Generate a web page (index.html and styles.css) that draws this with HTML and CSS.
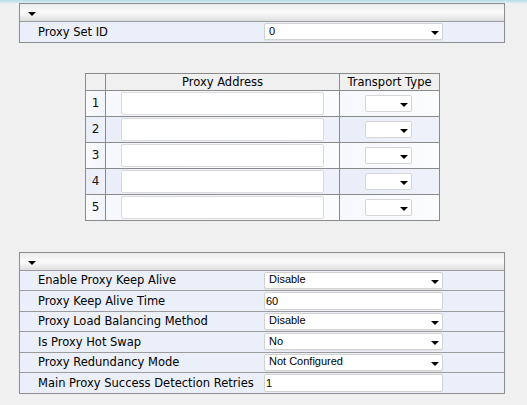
FILE: index.html
```html
<!DOCTYPE html>
<html>
<head>
<meta charset="utf-8">
<title>Proxy Set</title>
<link rel="stylesheet" href="styles.css">
</head>
<body>
<div class="topstrip"></div>

<div class="panel">
  <div class="phead"><span class="tri"></span></div>
  <div class="prow">
    <div class="lbl">Proxy Set ID</div>
    <div class="sel"><span class="sv">0</span><span class="arr"></span></div>
  </div>
</div>

<table class="grid">
  <thead>
    <tr><th class="cn"></th><th class="ca">Proxy Address</th><th class="ct">Transport Type</th></tr>
  </thead>
  <tbody>
    <tr class="odd"><td class="num">1</td><td class="addr"><div class="tin"></div></td><td class="tt"><div class="tsel"><span class="arr"></span></div></td></tr>
    <tr class="even"><td class="num">2</td><td class="addr"><div class="tin"></div></td><td class="tt"><div class="tsel"><span class="arr"></span></div></td></tr>
    <tr class="odd"><td class="num">3</td><td class="addr"><div class="tin"></div></td><td class="tt"><div class="tsel"><span class="arr"></span></div></td></tr>
    <tr class="even"><td class="num">4</td><td class="addr"><div class="tin"></div></td><td class="tt"><div class="tsel"><span class="arr"></span></div></td></tr>
    <tr class="odd"><td class="num">5</td><td class="addr"><div class="tin"></div></td><td class="tt"><div class="tsel"><span class="arr"></span></div></td></tr>
  </tbody>
</table>

<div class="panel second">
  <div class="phead"><span class="tri"></span></div>
  <div class="prow">
    <div class="lbl">Enable Proxy Keep Alive</div>
    <div class="sel"><span class="sv">Disable</span><span class="arr"></span></div>
  </div>
  <div class="prow">
    <div class="lbl">Proxy Keep Alive Time</div>
    <div class="inp">60</div>
  </div>
  <div class="prow">
    <div class="lbl">Proxy Load Balancing Method</div>
    <div class="sel"><span class="sv">Disable</span><span class="arr"></span></div>
  </div>
  <div class="prow">
    <div class="lbl">Is Proxy Hot Swap</div>
    <div class="sel"><span class="sv">No</span><span class="arr"></span></div>
  </div>
  <div class="prow">
    <div class="lbl">Proxy Redundancy Mode</div>
    <div class="sel"><span class="sv">Not Configured</span><span class="arr"></span></div>
  </div>
  <div class="prow">
    <div class="lbl">Main Proxy Success Detection Retries</div>
    <div class="inp">1</div>
  </div>
</div>
</body>
</html>
```

FILE: styles.css
```css
html, body {
  margin: 0;
  padding: 0;
}
body {
  background: #f0f0f0;
  font-family: "DejaVu Sans", Verdana, sans-serif;
  font-size: 11.5px;
  color: #000;
}
.topstrip {
  height: 3px;
  background: linear-gradient(#b7dce8, #d9eef4);
}
.panel {
  margin-left: 19px;
  width: 486px;
  box-sizing: border-box;
  border: 1px solid #8d8d8d;
}
.panel.second {
  margin-top: 31px;
}
.phead {
  height: 17px;
  background: linear-gradient(#ebebeb, #fafafa 45%, #f6f6f6 60%, #dedede);
  display: flex;
  align-items: flex-start;
}
.tri {
  display: block;
  width: 0;
  height: 0;
  margin-left: 8px;
  margin-top: 8px;
  border-left: 4px solid transparent;
  border-right: 4px solid transparent;
  border-top: 4px solid #000;
}
.prow {
  display: flex;
  align-items: center;
  height: 19.5px;
  background: #ebeff9;
  border-top: 1px solid #9c9c9c;
}
.lbl {
  width: 244px;
  box-sizing: border-box;
  padding-left: 18px;
  white-space: nowrap;
}
.sel, .inp {
  width: 179px;
  height: 17px;
  box-sizing: border-box;
  background: #fff;
  border: 1px solid #d2d2d2;
  border-radius: 2px;
  font-family: "Liberation Sans", Arial, sans-serif;
  font-size: 11px;
  display: flex;
  align-items: center;
}
.sel {
  padding-left: 4px;
  justify-content: space-between;
  box-shadow: 0 1px 0 #e4e4e4;
}
.inp {
  padding-left: 1px;
  height: 18px;
}
.sv {
  line-height: 1;
  margin-top: -1px;
}
.arr {
  display: block;
  width: 0;
  height: 0;
  margin-right: 3px;
  margin-top: 3px;
  border-left: 4px solid transparent;
  border-right: 4px solid transparent;
  border-top: 4px solid #000;
}
.grid {
  margin-top: 30px;
  margin-left: 85px;
  width: 354px;
  table-layout: fixed;
  border-collapse: separate;
  border-spacing: 0;
  border-left: 1px solid #8a8a8a;
  border-top: 1px solid #8a8a8a;
}
.grid th, .grid td {
  box-sizing: border-box;
  padding: 0;
  border-right: 1px solid #8a8a8a;
  border-bottom: 1px solid #8a8a8a;
}
.grid th {
  height: 17px;
  font-weight: normal;
  text-align: center;
  background: #f0f0f0;
  vertical-align: middle;
  line-height: 16px;
}
.grid .cn { width: 20px; }
.grid .ca { width: 234px; }
.grid .ct { width: 100px; }
.grid td {
  height: 26px;
  vertical-align: middle;
}
.grid .num {
  text-align: center;
  font-size: 12px;
  color: #111;
}
.odd td {
  background: linear-gradient(to right, #f6f8fd, #fbfcfe);
}
.odd td.num {
  background: linear-gradient(to right, #fbfbfd, #f2f4fb);
}
.even td {
  background: linear-gradient(to right, #eaeef9, #eef1fa);
}
.tin {
  width: 203px;
  height: 23px;
  box-sizing: border-box;
  margin: 0 auto;
  background: #fff;
  border: 1px solid #dadada;
  border-radius: 2px;
}
.tsel {
  width: 47px;
  height: 17px;
  box-sizing: border-box;
  margin: 0 auto 0 25px;
  background: #fff;
  border: 1px solid #d6d6d6;
  border-radius: 2px;
  display: flex;
  align-items: center;
  justify-content: flex-end;
}
```
